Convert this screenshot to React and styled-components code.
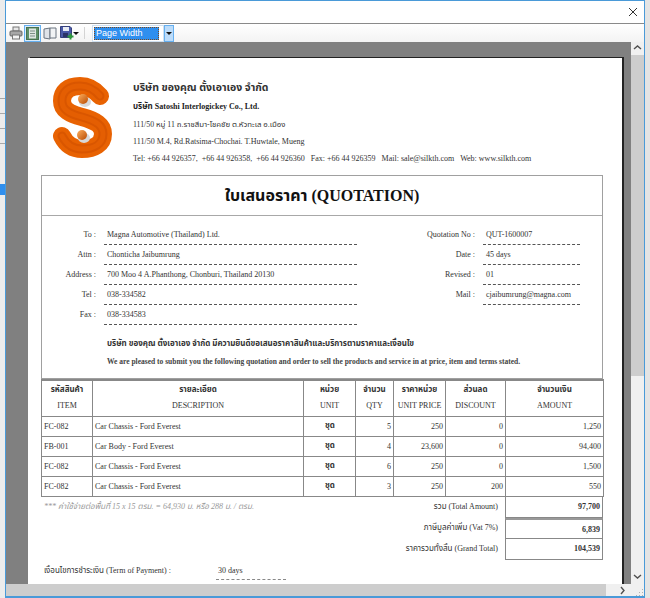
import styled, { createGlobalStyle } from "styled-components";

const GlobalStyle = createGlobalStyle`
  html, body {
    margin: 0;
    padding: 0;
    width: 650px;
    height: 598px;
    overflow: hidden;
    background: #e4e4e4;
  }
`;

const serif = `"Liberation Serif", "Noto Sans Thai", "Noto Sans", serif`;

const Screen = styled.div`
  display: flex;
  width: 650px;
  height: 598px;
  font-family: ${serif};
  color: #222;
`;
const Behind = styled.div`
  width: 5px;
  flex: none;
  padding-top: 98px;
  display: flex;
  flex-direction: column;
  gap: 14px;
  background: #ececec;
`;
const BehindLine = styled.div`
  height: 1px;
  background: #a8a8a8;
`;
const BehindSelected = styled.div`
  height: 11px;
  margin-top: 26px;
  background: #2f8fee;
`;
const Window = styled.div`
  width: 640px;
  height: 598px;
  flex: none;
  box-sizing: border-box;
  border: 1px solid #4a9ad8;
  border-bottom-width: 2px;
  display: flex;
  flex-direction: column;
  background: #fff;
`;
const TitleBar = styled.div`
  height: 22px;
  flex: none;
  display: flex;
  justify-content: flex-end;
  align-items: center;
  padding-right: 6px;
  border-bottom: 1px solid #8a8a8a;
`;
const Toolbar = styled.div`
  height: 18px;
  flex: none;
  display: flex;
  align-items: center;
  padding-left: 1px;
  background: linear-gradient(#fff, #f3f3f3);
`;
const ToolIcon = styled.div`
  width: 17px;
  height: 17px;
  display: flex;
  align-items: center;
  justify-content: center;
  box-sizing: border-box;
  border: 1px solid ${(p) => (p.$active ? "#66b0f0" : "transparent")};
  background: ${(p) => (p.$active ? "#d8ebfb" : "none")};
`;
const Caret = styled.span`
  width: 0;
  height: 0;
  border-left: 3px solid transparent;
  border-right: 3px solid transparent;
  border-top: 3px solid #111;
`;
const SaveCaret = styled(Caret)`
  margin-left: -2px;
`;
const Divider = styled.div`
  width: 1px;
  height: 12px;
  margin: 0 7px 0 5px;
  background: #d4d4d4;
`;
const ZoomBox = styled.div`
  width: 72px;
  height: 17px;
  box-sizing: border-box;
  padding: 1px 4px 1px 1px;
  background: #fff;
  border: 1px solid #cfe0f0;
`;
const ZoomValue = styled.div`
  height: 13px;
  box-sizing: border-box;
  border: 1px dotted #7a4a20;
  background: #2f8fef;
  color: #fff;
  font: 9px/11px "Liberation Sans", sans-serif;
  padding-left: 1px;
`;
const ZoomArrow = styled.div`
  width: 10px;
  height: 17px;
  box-sizing: border-box;
  display: flex;
  align-items: center;
  justify-content: center;
  background: #bcdcfa;
  border: 1px solid #66b0f0;
`;
const Body = styled.div`
  flex: 1;
  min-height: 0;
  display: grid;
  grid-template-columns: 1fr 13px;
  grid-template-rows: 1fr 12px;
`;
const Viewport = styled.div`
  overflow: hidden;
  background: #808080;
  padding: 16px 0 0 22px;
`;
const Sheet = styled.div`
  width: 594px;
  height: 600px;
  box-sizing: border-box;
  padding: 19px 19px 0 13px;
  background: #fff;
  box-shadow: 2px -1px 0 #222;
  opacity: 0.999;
`;
const Letterhead = styled.div`
  display: flex;
  height: 98px;
  padding-left: 11px;
`;
const CompanyText = styled.div`
  margin-left: 17px;
  padding-top: 3px;
`;
const CompanyName = styled.div`
  font-size: 10.5px;
  font-weight: 700;
  line-height: 16px;
  color: #333;
`;
const CompanySub = styled.div`
  font-size: 8px;
  font-weight: 700;
  line-height: 18px;
  margin-top: 2px;
`;
const CompanyLine = styled.div`
  font-size: 8px;
  line-height: 17px;
  white-space: pre;
  color: #333;
`;
const CompanyThaiLine = styled(CompanyLine)`
  font-size: 7.8px;
`;
const QuoteBox = styled.div`
  border: 1px solid #a0a0a0;
  height: 204px;
  box-sizing: border-box;
`;
const QuoteTitle = styled.h1`
  margin: 0;
  height: 39px;
  border-bottom: 1px solid #a8a8a8;
  text-align: center;
  font-size: 16px;
  line-height: 40px;
  font-weight: 700;
  color: #111;
`;
const InfoColumns = styled.div`
  display: flex;
  justify-content: space-between;
  height: 110px;
  padding: 9px 22px 0 0;
`;
const InfoColumn = styled.div`
  display: flex;
  flex-direction: column;
`;
const InfoRow = styled.div`
  display: flex;
  height: 20px;
`;
const InfoLabel = styled.div`
  width: ${(p) => p.$width}px;
  text-align: right;
  font-size: 8px;
  line-height: 20px;
  padding-right: 8px;
  flex: none;
  box-sizing: border-box;
  color: #333;
`;
const InfoValue = styled.div`
  width: ${(p) => p.$width}px;
  box-sizing: border-box;
  padding-left: 3px;
  font-size: 8px;
  line-height: 20px;
  border-bottom: 1px dashed #555;
  color: #333;
`;
const Intro = styled.div`
  padding-left: 65px;
`;
const IntroThai = styled.div`
  font-size: 8px;
  line-height: 18px;
  font-weight: 700;
  color: #333;
`;
const IntroEnglish = styled.div`
  font-size: 7.5px;
  line-height: 18px;
  font-weight: 700;
  color: #444;
`;
const ItemsTable = styled.table`
  width: 562px;
  border-collapse: collapse;
  table-layout: fixed;
  border: 1px solid #888;
  font-size: 8px;
  color: #333;
`;
const HeadCell = styled.th`
  box-sizing: border-box;
  width: ${(p) => p.$width}px;
  height: 36px;
  padding: 0;
  border: 1px solid #888;
  border-top-width: 2px;
  font-size: 8px;
  font-weight: 400;
  line-height: 16px;
  text-align: center;
`;
const HeadThai = styled.div`
  font-weight: 700;
`;
const Cell = styled.td`
  box-sizing: border-box;
  height: 20px;
  padding: 0 ${(p) => (p.$align === "right" ? 2 : 1)}px 0 2px;
  border: 1px solid #888;
  font-weight: ${(p) => (p.$strong ? 700 : 400)};
  text-align: ${(p) => p.$align || "left"};
`;
const Summary = styled.div`
  display: flex;
  justify-content: flex-end;
  width: 562px;
  position: relative;
`;
const SummaryRows = styled.div`
  display: flex;
  flex-direction: column;
`;
const SummaryRow = styled.div`
  display: flex;
  height: 21px;
  font-size: 8px;
  line-height: 20px;
  color: #333;
`;
const SummaryLabel = styled.div`
  width: 300px;
  text-align: right;
  padding-right: 7px;
  box-sizing: border-box;
`;
const SummaryAmount = styled.div`
  width: 98px;
  box-sizing: border-box;
  text-align: right;
  padding-right: 2px;
  font-weight: 700;
  border: 1px solid #888;
  border-top: ${(p) => (p.$thick ? "2px solid #999" : "none")};
`;
const Note = styled.div`
  position: absolute;
  left: 3px;
  top: 3px;
  font-size: 8px;
  line-height: 14px;
  font-style: italic;
  color: #999;
`;
const Terms = styled.div`
  display: flex;
  margin-top: 2px;
  padding-left: 3px;
  font-size: 8px;
  line-height: 17px;
  color: #333;
`;
const TermLabel = styled.div`
  width: 172px;
  flex: none;
`;
const TermValue = styled.div`
  width: 70px;
  padding-left: 2px;
  box-sizing: border-box;
  border-bottom: 1px dashed #888;
`;
const VScroll = styled.div`
  display: flex;
  flex-direction: column;
  background: #f0f0f0;
`;
const ScrollButton = styled.div`
  height: 13px;
  flex: none;
  display: flex;
  align-items: center;
  justify-content: center;
`;
const VThumb = styled.div`
  height: 321px;
  flex: none;
  background: #cdcdcd;
`;
const VSpace = styled.div`
  flex: 1;
`;
const HScroll = styled.div`
  display: flex;
  background: #f0f0f0;
`;
const HThumb = styled.div`
  width: 600px;
  background: #cdcdcd;
`;
const HEnd = styled.div`
  flex: 1;
  display: flex;
  align-items: center;
  justify-content: flex-end;
  padding-right: 3px;
`;
const Corner = styled.div`
  display: flex;
  align-items: flex-end;
  justify-content: flex-end;
  background: #f0f0f0;
`;

const items = [
  { code: "FC-082", name: "Car Chassis - Ford Everest", qty: 5, price: "250", off: "0", total: "1,250" },
  { code: "FB-001", name: "Car Body - Ford Everest", qty: 4, price: "23,600", off: "0", total: "94,400" },
  { code: "FC-082", name: "Car Chassis - Ford Everest", qty: 6, price: "250", off: "0", total: "1,500" },
  { code: "FC-082", name: "Car Chassis - Ford Everest", qty: 3, price: "250", off: "200", total: "550" },
];

const leftInfo = [
  ["To :", "Magna Automotive (Thailand) Ltd."],
  ["Attn :", "Chonticha Jaibumrung"],
  ["Address :", "700 Moo 4 A.Phanthong, Chonburi, Thailand 20130"],
  ["Tel :", "038-334582"],
  ["Fax :", "038-334583"],
];

const rightInfo = [
  ["Quotation No :", "QUT-1600007"],
  ["Date :", "45 days"],
  ["Revised :", "01"],
  ["Mail :", "cjaibumrung@magna.com"],
];

const heads = [
  [51, "รหัสสินค้า", "ITEM"],
  [211, "รายละเอียด", "DESCRIPTION"],
  [52, "หน่วย", "UNIT"],
  [38, "จำนวน", "QTY"],
  [52, "ราคาหน่วย", "UNIT PRICE"],
  [60, "ส่วนลด", "DISCOUNT"],
  [98, "จำนวนเงิน", "AMOUNT"],
];

const logoCurve =
  "M48 19C42 12 35 9 28 9C16 9 10 15 10 24C10 33 18 37 30 40C44 44 51 48 51 57C51 67 42 72 30 72C20 72 14 67 10 59";

function Logo() {
  return (
    <svg width="64" height="82" viewBox="0 0 64 82">
      <defs>
        <linearGradient id="ballFill" x1="0" y1="0" x2="1" y2="1">
          <stop offset="0" stopColor="#ffb060" />
          <stop offset="1" stopColor="#b84a00" />
        </linearGradient>
      </defs>
      <path d={logoCurve} fill="none" stroke="#e86202" strokeWidth="18" strokeLinecap="round" />
      <path d={logoCurve} fill="none" stroke="#d95600" strokeWidth="9" strokeLinecap="round" />
      <path d={logoCurve} fill="none" stroke="#e45e02" strokeWidth="5" strokeLinecap="round" />
      <ellipse cx="33" cy="25" rx="6" ry="5" fill="#d8d8d8" />
      <ellipse cx="32" cy="61" rx="6" ry="5" fill="#d8d8d8" />
      <circle cx="31" cy="22" r="5" fill="url(#ballFill)" />
      <circle cx="30" cy="58" r="5" fill="url(#ballFill)" />
    </svg>
  );
}

function PrintIcon() {
  return (
    <svg width="14" height="14" viewBox="0 0 14 14">
      <rect x="4" y="1" width="6" height="4" fill="#e8e8e8" stroke="#777" />
      <rect x="1" y="5" width="12" height="5" rx="1" fill="#a8a8a8" stroke="#666" />
      <rect x="3.5" y="9" width="7" height="4" fill="#f4f4f4" stroke="#777" />
    </svg>
  );
}

function PageIcon() {
  return (
    <svg width="13" height="13" viewBox="0 0 13 13">
      <rect x="0.5" y="0.5" width="12" height="12" fill="#5f9068" stroke="#48724f" />
      <rect x="3" y="1.5" width="7" height="10" fill="#dfe6e2" />
      <path d="M4 4H9M4 6.5H9M4 9H9" stroke="#7d8f86" />
    </svg>
  );
}

function BookIcon() {
  return (
    <svg width="14" height="13" viewBox="0 0 14 13">
      <path d="M1 2L7 1V12L1 11Z" fill="#dfe3e8" stroke="#6a7480" />
      <path d="M7 1H13V11H7Z" fill="#f1f3f5" stroke="#6a7480" />
    </svg>
  );
}

function SaveIcon() {
  return (
    <svg width="14" height="14" viewBox="0 0 14 14">
      <path d="M0.5 0.5H10L11.5 2V11.5H0.5Z" fill="#4a5aa8" stroke="#36407c" />
      <rect x="3" y="1" width="6" height="4" fill="#e8ecf4" />
      <rect x="3" y="7" width="5" height="4" fill="#2b3468" />
      <path d="M10.5 7.5V13.5M7.5 10.5H13.5" stroke="#2f9a3a" strokeWidth="2" />
    </svg>
  );
}

function CloseIcon() {
  return (
    <svg width="10" height="10" viewBox="0 0 10 10">
      <path d="M1 1L9 9M9 1L1 9" stroke="#333" strokeWidth="1" fill="none" />
    </svg>
  );
}

function Chevron({ direction }) {
  const paths = {
    up: "M1 5L4.5 2L8 5",
    down: "M1 2L4.5 5L8 2",
    right: "M2 1L5 4.5L2 8",
  };
  return (
    <svg width="9" height="9" viewBox="0 0 9 9">
      <path d={paths[direction]} stroke="#505050" strokeWidth="1.4" fill="none" />
    </svg>
  );
}

function Grip() {
  return (
    <svg width="8" height="8" viewBox="0 0 8 8">
      <path d="M6 1h1v1H6zM6 4h1v1H6zM3 4h1v1H3zM6 7h1v1H6zM3 7h1v1H3zM0 7h1v1H0z" fill="#b0b0b0" />
    </svg>
  );
}

export default function App() {
  return (
    <Screen>
      <GlobalStyle />
      <Behind>
        <BehindLine />
        <BehindLine />
        <BehindLine />
        <BehindLine />
        <BehindSelected />
      </Behind>
      <Window>
        <TitleBar>
          <CloseIcon />
        </TitleBar>
        <Toolbar>
          <ToolIcon><PrintIcon /></ToolIcon>
          <ToolIcon $active><PageIcon /></ToolIcon>
          <ToolIcon><BookIcon /></ToolIcon>
          <ToolIcon><SaveIcon /></ToolIcon>
          <SaveCaret />
          <Divider />
          <ZoomBox><ZoomValue>Page Width</ZoomValue></ZoomBox>
          <ZoomArrow><Caret /></ZoomArrow>
        </Toolbar>
        <Body>
          <Viewport>
            <Sheet>
              <Letterhead>
                <Logo />
                <CompanyText>
                  <CompanyName>บริษัท ของคุณ ตั้งเอาเอง จำกัด</CompanyName>
                  <CompanySub>บริษัท Satoshi Interlogickey Co., Ltd.</CompanySub>
                  <CompanyThaiLine>111/50 หมู่ 11 ถ.ราชสีมา-โชคชัย ต.หัวทะเล อ.เมือง</CompanyThaiLine>
                  <CompanyLine>111/50 M.4, Rd.Ratsima-Chochai. T.Huwtale, Mueng</CompanyLine>
                  <CompanyLine>Tel: +66 44 926357,  +66 44 926358,  +66 44 926360   Fax: +66 44 926359   Mail: sale@silkth.com   Web: www.silkth.com</CompanyLine>
                </CompanyText>
              </Letterhead>
              <QuoteBox>
                <QuoteTitle>ใบเสนอราคา (QUOTATION)</QuoteTitle>
                <InfoColumns>
                  <InfoColumn>
                    {leftInfo.map(([label, value]) => (
                      <InfoRow key={label}>
                        <InfoLabel $width={62}>{label}</InfoLabel>
                        <InfoValue $width={253}>{value}</InfoValue>
                      </InfoRow>
                    ))}
                  </InfoColumn>
                  <InfoColumn>
                    {rightInfo.map(([label, value]) => (
                      <InfoRow key={label}>
                        <InfoLabel $width={100}>{label}</InfoLabel>
                        <InfoValue $width={97}>{value}</InfoValue>
                      </InfoRow>
                    ))}
                  </InfoColumn>
                </InfoColumns>
                <Intro>
                  <IntroThai>บริษัท ของคุณ ตั้งเอาเอง จำกัด มีความยินดีขอเสนอราคาสินค้าและบริการตามราคาและเงื่อนไข</IntroThai>
                  <IntroEnglish>We are pleased to submit you the following quotation and order to sell the products and service in at price, item and terms stated.</IntroEnglish>
                </Intro>
              </QuoteBox>
              <ItemsTable>
                <thead>
                  <tr>
                    {heads.map(([width, thai, english]) => (
                      <HeadCell key={english} $width={width}>
                        <HeadThai>{thai}</HeadThai>
                        {english}
                      </HeadCell>
                    ))}
                  </tr>
                </thead>
                <tbody>
                  {items.map((item, index) => (
                    <tr key={index}>
                      <Cell>{item.code}</Cell>
                      <Cell>{item.name}</Cell>
                      <Cell $align="center" $strong>ชุด</Cell>
                      <Cell $align="right">{item.qty}</Cell>
                      <Cell $align="right">{item.price}</Cell>
                      <Cell $align="right">{item.off}</Cell>
                      <Cell $align="right">{item.total}</Cell>
                    </tr>
                  ))}
                </tbody>
              </ItemsTable>
              <Summary>
                <Note>*** ค่าใช้จ่ายต่อพื้นที่ 15 x 15 ตรม. = 64,930 บ. หรือ 288 บ. / ตรม.</Note>
                <SummaryRows>
                  <SummaryRow>
                    <SummaryLabel>รวม (Total Amount)</SummaryLabel>
                    <SummaryAmount>97,700</SummaryAmount>
                  </SummaryRow>
                  <SummaryRow>
                    <SummaryLabel>ภาษีมูลค่าเพิ่ม (Vat 7%)</SummaryLabel>
                    <SummaryAmount $thick>6,839</SummaryAmount>
                  </SummaryRow>
                  <SummaryRow>
                    <SummaryLabel>ราคารวมทั้งสิ้น (Grand Total)</SummaryLabel>
                    <SummaryAmount>104,539</SummaryAmount>
                  </SummaryRow>
                </SummaryRows>
              </Summary>
              <Terms>
                <TermLabel>เงื่อนไขการชำระเงิน (Term of Payment) :</TermLabel>
                <TermValue>30 days</TermValue>
              </Terms>
            </Sheet>
          </Viewport>
          <VScroll>
            <ScrollButton><Chevron direction="up" /></ScrollButton>
            <VThumb />
            <VSpace />
            <ScrollButton><Chevron direction="down" /></ScrollButton>
          </VScroll>
          <HScroll>
            <HThumb />
            <HEnd><Chevron direction="right" /></HEnd>
          </HScroll>
          <Corner><Grip /></Corner>
        </Body>
      </Window>
    </Screen>
  );
}
